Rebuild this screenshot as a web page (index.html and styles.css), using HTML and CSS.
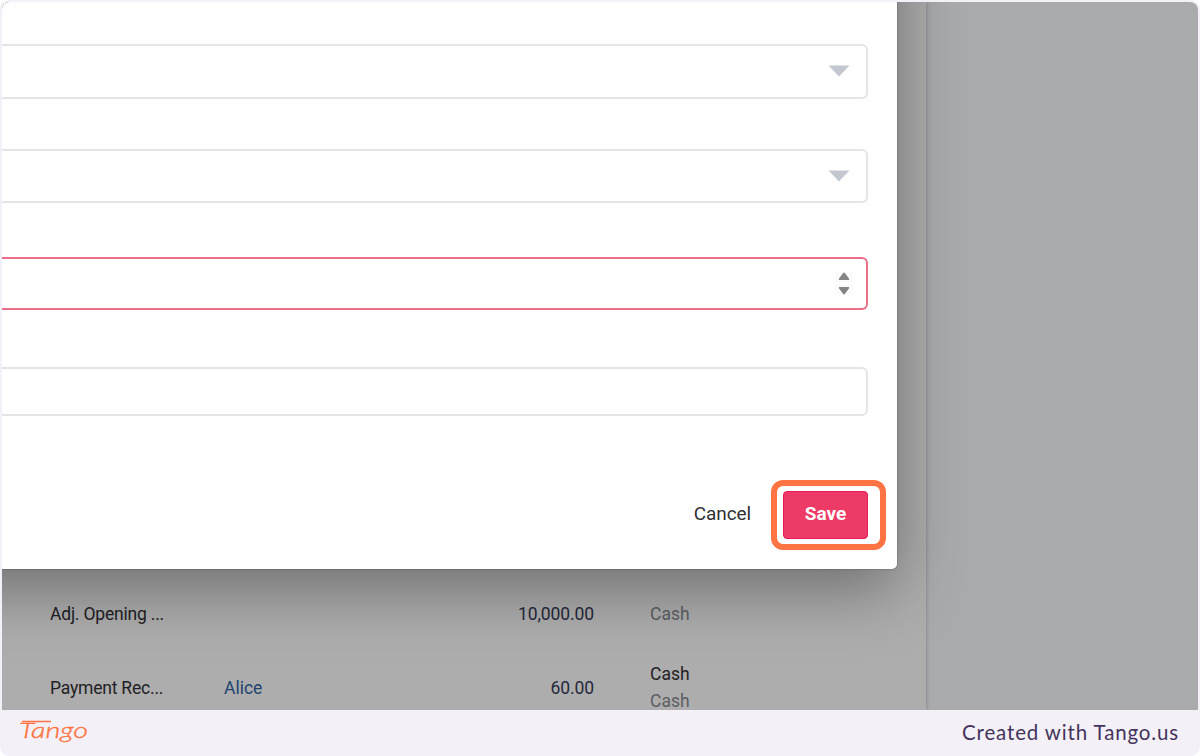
FILE: index.html
```html
<!DOCTYPE html>
<html lang="en">
  <head>
    <meta charset="UTF-8" />
    <title>Save payment</title>
    <link rel="stylesheet" href="styles.css">
  </head>
  <body>
    <div class="frame">
      <div class="screen">
        <div class="sheet">
          <div class="row">
            <div class="type">Adj. Opening ...</div>
            <div class="name"></div>
            <div class="amount">10,000.00</div>
            <div class="account"><span class="muted">Cash</span></div>
          </div>
          <div class="row">
            <div class="type">Payment Rec...</div>
            <div class="name">Alice</div>
            <div class="amount">60.00</div>
            <div class="account">
              <span>Cash</span>
              <span class="muted">Cash</span>
            </div>
          </div>
        </div>

        <div class="modal">
          <div class="field select">
            <svg class="caret" width="22" height="12" viewBox="0 0 22 12"><path d="M0.5 0.5H21.5L11 11.5Z" fill="#c3c8d0" /></svg>
          </div>
          <div class="field select second">
            <svg class="caret" width="22" height="12" viewBox="0 0 22 12"><path d="M0.5 0.5H21.5L11 11.5Z" fill="#c3c8d0" /></svg>
          </div>
          <div class="field number">
            <svg class="spinner" width="18" height="23" viewBox="0 0 18 23">
              <path d="M0 0H18V10.500H0ZM0 12.500H18V23H0Z" fill="#fafafa" />
              <path d="M4 8V6.500L8 1.200Q9 0 10 1.200L14 6.500V8ZM4 15V16.500L8 21.800Q9 23 10 21.800L14 16.500V15Z" fill="#858585" />
            </svg>
          </div>
          <div class="field text"></div>
          <div class="actions">
            <button class="cancel">Cancel</button>
            <div class="highlight">
              <button class="save">Save</button>
            </div>
          </div>
        </div>
      </div>

      <div class="footer">
        <svg class="logo" width="76" height="44" viewBox="0 0 76 44">
          <text x="1" y="27" textLength="69" lengthAdjust="spacingAndGlyphs">Tango</text>
          <path d="M4 10.500H33" />
        </svg>
        <div class="credit">Created with Tango.us</div>
      </div>
    </div>
  </body>
</html>
```
FILE: styles.css
```css
body {
  margin: 0;
  background: #fff;
  font-family: Roboto, Arial, sans-serif;
}
.frame {
  box-sizing: border-box;
  width: 1200px;
  height: 756px;
  padding: 2px 2px 0;
  background: #f3f1f7;
  border-radius: 9px;
  overflow: hidden;
}
.screen {
  position: relative;
  height: 708px;
  background: #a8aaac;
  border-radius: 8px 8px 0 0;
  overflow: hidden;
}
.sheet {
  box-sizing: border-box;
  width: 924px;
  height: 708px;
  padding: 576px 0 0 48px;
  background: #adadad;
  box-shadow: 0 0 4px rgba(60, 60, 80, 0.4);
}
.row {
  display: grid;
  grid-template-columns: 174px 150px 220px 1fr;
  align-items: center;
  height: 73.5px;
  font-size: 17.5px;
  line-height: 27px;
  color: #1f2024;
}
.type {
  letter-spacing: -0.2px;
}
.name {
  color: #21436f;
}
.amount {
  text-align: right;
  letter-spacing: -0.1px;
  color: #25293a;
}
.account {
  display: flex;
  flex-direction: column;
  padding-left: 56px;
}
.muted {
  color: #5c5e63;
}
.modal {
  position: absolute;
  top: -200px;
  left: -200px;
  box-sizing: border-box;
  width: 1095px;
  height: 767px;
  padding: 242px 29px 0 0;
  background: #fff;
  border-radius: 0 0 5px 0;
  box-shadow: 0 0 2px rgba(0, 0, 0, 0.4), 0 20px 64px rgba(0, 0, 0, 0.36);
}
.field {
  box-sizing: border-box;
  display: flex;
  align-items: center;
  justify-content: flex-end;
  height: 55px;
  border: 2px solid #e5e5e5;
  border-left: none;
  border-radius: 0 6px 6px 0;
}
.caret {
  margin: 0 16px 2px 0;
}
.second {
  height: 54px;
  margin-top: 50px;
}
.second .caret {
  margin-bottom: 0;
}
.number {
  height: 53px;
  margin-top: 54px;
  border: 2px solid #ec6d88;
  border-left: none;
}
.spinner {
  margin: 0 13px 0 0;
}
.text {
  height: 49px;
  margin-top: 57px;
}
.actions {
  display: flex;
  justify-content: flex-end;
  align-items: center;
  margin: 64px -18px 0 0;
}
button {
  border: none;
  font-family: inherit;
  font-size: 19px;
  padding: 0;
}
.cancel {
  margin-right: 20px;
  padding-bottom: 3px;
  background: none;
  color: #303033;
  letter-spacing: -0.1px;
}
.highlight {
  box-sizing: border-box;
  width: 115px;
  height: 70px;
  padding: 5px 6px;
  border: 6px solid #ff7442;
  border-radius: 12px;
}
.save {
  width: 85px;
  height: 48px;
  padding-bottom: 3px;
  border: 1px solid #e9185b;
  border-radius: 4px;
  background: #ee3a67;
  color: #fff;
  font-weight: bold;
}
.footer {
  display: flex;
  justify-content: space-between;
  align-items: center;
  height: 46px;
  padding: 0 19px 0 16px;
}
.logo text {
  font-family: Lato, sans-serif;
  font-size: 22px;
  font-style: italic;
  font-weight: 300;
  fill: #ff7442;
  stroke: #ff7442;
  stroke-width: 0.4;
}
.logo path {
  stroke: #ff7442;
  stroke-width: 1.5;
}
.credit {
  padding-bottom: 2px;
  font-family: Lato, sans-serif;
  font-size: 20.5px;
  letter-spacing: 0.85px;
  color: #44345b;
}
```
